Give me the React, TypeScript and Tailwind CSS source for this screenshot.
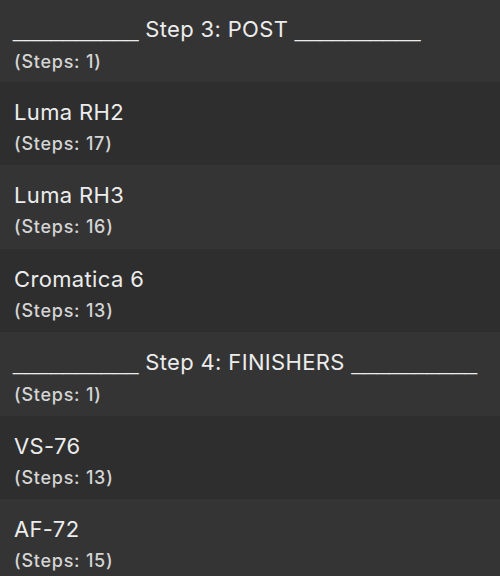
const rows = [
  { title: "Step 3: POST", steps: 1, header: true },
  { title: "Luma RH2", steps: 17 },
  { title: "Luma RH3", steps: 16 },
  { title: "Cromatica 6", steps: 13 },
  { title: "Step 4: FINISHERS", steps: 1, header: true },
  { title: "VS-76", steps: 13 },
  { title: "AF-72", steps: 15 },
];

const Rule = () => (
  <span className="font-['Liberation_Sans',sans-serif] text-[22.6px] tracking-[0px]">
    __________
  </span>
);

const App = () => {
  return (
    <div
      className="h-[576px] w-[500px] overflow-hidden bg-[#2e2e2e]"
      style={{ fontFamily: "Inter, 'Liberation Sans', sans-serif" }}
    >
      <div className="-mt-[1.4px]">
        {rows.map((row, i) => (
          <div
            key={row.title}
            className={`flex h-[83.4px] flex-col px-[13px] pt-[16px] ${
              i % 2 === 0 ? "bg-[#343434]" : "bg-[#2e2e2e]"
            }`}
          >
            <div className="whitespace-nowrap text-[22px] leading-[28px] tracking-[0.35px] text-[#ececec]">
              {row.header ? (
                <>
                  <Rule /> {row.title} <Rule />
                </>
              ) : (
                <span className="pl-px">{row.title}</span>
              )}
            </div>
            <div className="mt-[7px] pl-px text-[18px] font-medium leading-[22px] tracking-[0.75px] text-[#d4d4d4]">
              (Steps: {row.steps})
            </div>
          </div>
        ))}
      </div>
    </div>
  );
};

export default App;
